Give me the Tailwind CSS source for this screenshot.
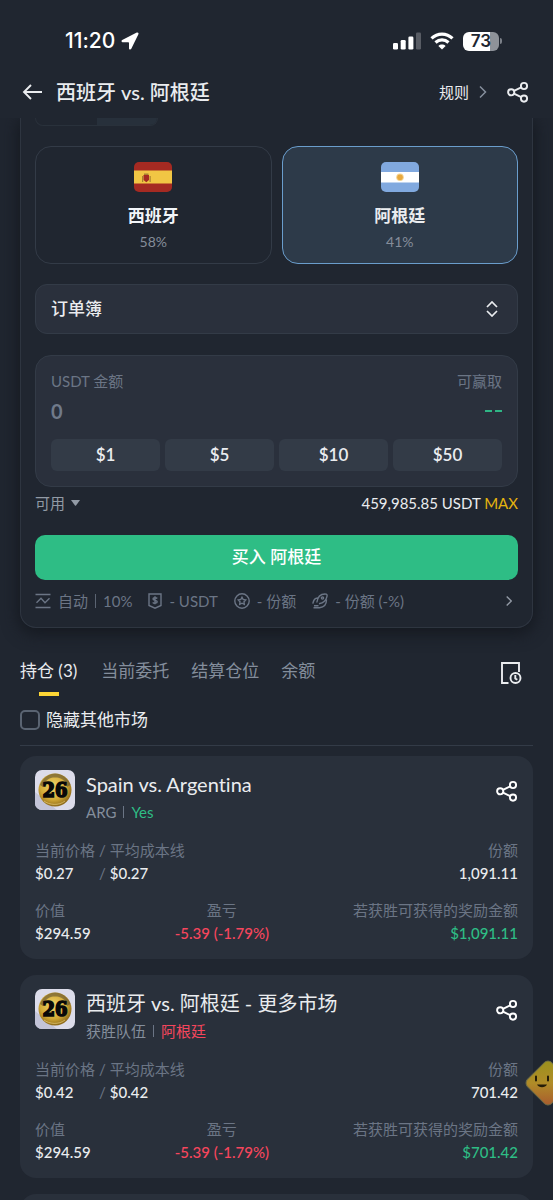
<!DOCTYPE html>
<html lang="zh-CN">
<head>
<meta charset="utf-8">
<meta name="viewport" content="width=device-width, initial-scale=1">
<title>西班牙 vs. 阿根廷</title>
<script src="https://cdn.jsdelivr.net/npm/@tailwindcss/browser@4"></script>
</head>
<body class="relative flex h-dvh flex-col overflow-hidden bg-[#202630] font-[Lato,'Noto_Sans_CJK_SC',sans-serif] text-[15px] leading-5 text-[#eaecef] [font-variant-ligatures:none]">

<svg class="absolute size-0" aria-hidden="true">
  <symbol id="share" viewBox="0 0 22 22">
    <g fill="none" stroke="currentColor" stroke-width="1.9">
      <circle cx="4.2" cy="11.300" r="3.1"/><circle cx="17" cy="5" r="3.1"/><circle cx="17" cy="17.600" r="3.1"/>
      <path d="M7 9.900l7.200-3.500M7 12.700l7.200 3.500"/>
    </g>
  </symbol>
  <symbol id="ball" viewBox="0 0 40 40">
    <rect width="40" height="40" rx="7" fill="#dcdcea"/>
    <path d="M0 22L22 40H7a7 7 0 0 1-7-7z" fill="#c3c4d8"/>
    <circle cx="20" cy="20" r="16.5" fill="url(#gold)"/>
    <path d="M5 15C8 7 15 3.600 20 3.500S33 7 35.500 15L32 17C31 10 26 7.500 20 7.500S10 10 8 17z" fill="#5f5233" opacity=".6"/>
    <path d="M9 31c5 4 15 5 21 0" fill="none" stroke="#f0d888" stroke-width="1" opacity=".6"/>
  </symbol>
  <defs>
    <radialGradient id="gold" cx=".45" cy=".4" r=".65"><stop offset="0" stop-color="#f0d46c"/><stop offset=".6" stop-color="#d3aa36"/><stop offset="1" stop-color="#7d5b14"/></radialGradient>
    <linearGradient id="mascot" gradientUnits="userSpaceOnUse" x1="6" y1="7" x2="40" y2="41"><stop offset="0" stop-color="#9a921c"/><stop offset=".5" stop-color="#b08c28"/><stop offset="1" stop-color="#a8582f"/></linearGradient>
  </defs>
</svg>

<header class="shrink-0">
  <div class="flex h-[66px] items-end justify-between pr-[51px] pb-3 pl-[65px] text-white">
    <div class="flex items-center gap-1.5">
      <span class="font-[Inter,sans-serif] text-[21px] leading-[26px] font-medium">11:20</span>
      <svg class="size-[18px]" viewBox="0 0 18 18" fill="currentColor"><path d="M15.800.6L1.200 8c-1.100.6-.8 2.200.4 2.200h5.700c.5 0 .7.2.7.700v5.500c0 1.300 1.700 1.600 2.300.4L17.400 2.200C17.900 1 17 .1 15.800.6z"/></svg>
    </div>
    <div class="flex h-[26px] items-center gap-[9px]">
      <svg class="h-[18px] w-7" viewBox="0 0 28 18" fill="currentColor"><rect y="11" width="5" height="6.500" rx="1.300"/><rect x="7.700" y="8" width="5" height="9.500" rx="1.300"/><rect x="15.400" y="4.500" width="5" height="13" rx="1.300"/><rect x="23" y=".5" width="5" height="17" rx="1.300" opacity=".25"/></svg>
      <svg class="h-[18px] w-6" viewBox="0 0 24 18" fill="none" stroke="currentColor" stroke-width="3.200"><path d="M1.500 6.300c6-5.700 15-5.700 21 0M5.500 10.500c3.800-3.500 9.200-3.500 13 0"/><path d="M12 17.500l-3.600-3.600c2-1.900 5.200-1.900 7.200 0z" fill="currentColor" stroke="none"/></svg>
      <div class="flex items-center gap-px">
        <span class="flex h-[19px] w-9 items-center justify-center rounded-md bg-linear-to-r from-white from-74% to-[#8e9299] to-74% font-[Inter,sans-serif] text-[17px] leading-none font-semibold text-[#202630]">73</span>
        <span class="h-1.5 w-0.5 rounded-r-sm bg-[#7b8088]"></span>
      </div>
    </div>
  </div>
  <div class="flex h-[52px] items-center pr-6 pl-[22px]">
    <button type="button" aria-label="返回" class="mr-3"><svg class="h-[18px] w-[22px]" viewBox="0 0 22 18" fill="none" stroke="currentColor" stroke-width="1.900"><path d="M20 9H2M9 2L2 9l7 7"/></svg></button>
    <h1 class="flex-1 text-xl leading-7 font-medium">西班牙 vs. 阿根廷</h1>
    <button type="button" class="mr-5 flex items-center gap-2.5">规则<svg class="h-3 w-2" viewBox="0 0 8 12" fill="none" stroke="#848e9c" stroke-width="1.500"><path d="M1 .5L6.500 6 1 11.500"/></svg></button>
    <button type="button" aria-label="分享"><svg class="size-[22px]"><use href="#share"/></svg></button>
  </div>
</header>

<main class="min-h-0 flex-1 overflow-x-hidden overflow-y-auto px-5 [scrollbar-width:none]">
  <section class="rounded-b-2xl border border-t-0 border-[#2e3540] px-3.5 pb-4 shadow-[0_4px_16px_2px_#151920]">
    <div class="flex h-2 w-[123px] overflow-hidden rounded-b-lg border border-t-0 border-[#29313b]"><div class="flex-1"></div><div class="flex-1 bg-[#27303b]"></div></div>

    <div class="mt-5 grid grid-cols-2 gap-2.5">
      <button type="button" class="flex h-[118px] flex-col items-center rounded-2xl border border-[#333b47] pt-[15px]">
        <svg class="h-[30px] w-[38px]" viewBox="0 0 38 30"><defs><clipPath id="fr"><rect width="38" height="30" rx="5"/></clipPath></defs><g clip-path="url(#fr)"><path fill="#a52a22" d="M0 0h38v30H0z"/><path fill="#f1c644" d="M0 8.500h38v13H0z"/><path fill="#a52a22" d="M9.500 13h5.500v5l-2.700 2.300L9.500 18z"/><path fill="#a78030" d="M8 14h1.200v6H8zM15.500 14h1.200v6h-1.200zM10 11.500h4.500V13H10z"/></g></svg>
        <span class="mt-3 text-[17px] leading-6 font-bold text-[#f2f5f9]">西班牙</span>
        <span class="mt-1 text-sm leading-5 text-[#858d9a]">58%</span>
      </button>
      <button type="button" aria-pressed="true" class="flex h-[118px] flex-col items-center rounded-2xl border border-[#6a9dcc] bg-[#2d3a49] pt-[15px]">
        <svg class="h-[30px] w-[38px]" viewBox="0 0 38 30"><g clip-path="url(#fr)"><path fill="#81a9df" d="M0 0h38v30H0z"/><path fill="#fff" d="M0 10h38v10.500H0z"/><circle cx="19" cy="15.200" r="3.800" fill="#f5d391"/><circle cx="19" cy="15.200" r="2.800" fill="#e8a93e"/></g></svg>
        <span class="mt-3 text-[17px] leading-6 font-bold">阿根廷</span>
        <span class="mt-1 text-sm leading-5 text-[#858d9a]">41%</span>
      </button>
    </div>

    <div class="relative mt-5">
      <select aria-label="订单簿" class="h-[50px] w-full appearance-none rounded-xl border border-[#333b47] bg-[#2a303c] px-[15px] text-[17px] font-medium text-[#eaecef]"><option>订单簿</option></select>
      <svg class="pointer-events-none absolute top-[17px] right-5 h-4 w-3" viewBox="0 0 12 16" fill="none" stroke="currentColor" stroke-width="1.700"><path d="M1 6l5-5 5 5M1 10l5 5 5-5"/></svg>
    </div>

    <div class="mt-[21px] rounded-2xl border border-[#333b47] bg-[#2a303c] p-[15px]">
      <div class="flex justify-between text-[#6b7585]"><label for="amount">USDT 金额</label><span>可赢取</span></div>
      <div class="mt-1.5 flex items-center justify-between">
        <input id="amount" inputmode="decimal" placeholder="0" class="h-7 min-w-0 flex-1 bg-transparent text-[20px] font-bold outline-none placeholder:text-[#707a8a]">
        <span class="flex gap-[3px]"><i class="h-0.5 w-[7px] bg-[#2fb585]"></i><i class="h-0.5 w-[7px] bg-[#2fb585]"></i></span>
      </div>
      <div class="mt-3.5 grid grid-cols-4 gap-[5px] text-[17px] font-semibold">
        <button type="button" class="h-8 rounded-md bg-[#333b47]">$1</button>
        <button type="button" class="h-8 rounded-md bg-[#333b47]">$5</button>
        <button type="button" class="h-8 rounded-md bg-[#333b47]">$10</button>
        <button type="button" class="h-8 rounded-md bg-[#333b47]">$50</button>
      </div>
    </div>

    <div class="mt-1.5 flex items-center justify-between">
      <button type="button" class="flex items-center gap-1.5 text-[#929aa5]">可用<svg class="h-1.5 w-[9px]" viewBox="0 0 9 6" fill="currentColor"><path d="M.5 0h8q.5 0 .2.600L5 5.500q-.5.500-1 0L.3.600Q0 0 .5 0z"/></svg></button>
      <p>459,985.85 USDT <button type="button" class="text-[#e5b30e]">MAX</button></p>
    </div>

    <button type="button" class="mt-[22px] h-[45px] w-full rounded-[10px] bg-[#2ebd85] pb-0.5 text-[17px] font-medium text-white">买入 阿根廷</button>

    <div class="mt-[11px] flex items-center text-[#6b7585]">
      <svg class="mr-[7px] size-4 shrink-0" viewBox="0 0 16 16" fill="none" stroke="currentColor" stroke-width="1.400"><path d="M.5 1.500h15M.5 14.500h15M1.500 9.700L6 5.200l4 4.500 4.500-4.500"/></svg>
      <span>自动</span><i class="mx-[7px] h-3.5 w-px bg-[#5b6472]"></i><span>10%</span>
      <svg class="mr-[7px] ml-4 h-4 w-3.5 shrink-0" viewBox="0 0 14 16" fill="none" stroke="currentColor" stroke-width="1.400"><path d="M1 1h12v11.500l-6 2.700-6-2.700z"/><path d="M9.200 5.500C8.500 4.400 5 4.300 5 6s4.200 1.100 4.200 2.800S5.500 10.600 4.800 9.300M7 3.300v8"/></svg>
      <span>- USDT</span>
      <svg class="mr-[7px] ml-4 size-4 shrink-0" viewBox="0 0 16 16" fill="none" stroke="currentColor" stroke-width="1.400"><circle cx="8" cy="8" r="7.200"/><path d="M8 4.300l1.200 2.200 2.500.5-1.700 1.800.3 2.500L8 10.200l-2.300 1.100.3-2.500L4.300 7l2.500-.5z"/></svg>
      <span>- 份额</span>
      <svg class="mr-[7px] ml-4 size-4 shrink-0" viewBox="0 0 16 16" fill="none" stroke="currentColor" stroke-width="1.400"><path d="M.8 10.700C1.500 7 3 4.700 6 5M4.800 9.500C5.500 4 8.500.8 13.500 1c1.300 0 1.800.9 1.500 2.300-.8 4-3.200 6.400-8 7.500M14.500 6.500c0 4-2 7.800-7 8.200H1.500M2 12.700h4.500"/><circle cx="10.500" cy="5" r="1.100"/></svg>
      <span>- 份额 (-%)</span>
      <svg class="mr-1.5 ml-auto h-2.5 w-1.5" viewBox="0 0 6 10" fill="none" stroke="#929aa5" stroke-width="1.400"><path d="M.7.500L5.300 5 .7 9.500"/></svg>
    </div>
  </section>

  <nav class="mt-[31px] flex text-[17px] leading-6 text-[#848e9c]">
    <a href="#" class="relative mr-6 h-[37px] text-[#eaecef]">持仓 (3)<i class="absolute bottom-0 left-1/2 h-1 w-5 -translate-x-1/2 bg-[#fcd535]"></i></a>
    <a href="#" class="mr-[22px]">当前委托</a>
    <a href="#" class="mr-[22px]">结算仓位</a>
    <a href="#">余额</a>
    <button type="button" aria-label="历史记录" class="mt-[3px] mr-[11px] ml-auto size-[22px] text-[#eaecef]"><svg class="size-[22px]" viewBox="0 0 22 22" fill="none" stroke="currentColor" stroke-width="1.900"><path d="M8.500 21H2V1h17v9"/><circle cx="15.500" cy="16" r="5"/><path d="M15.300 13v3.500l2 1.300"/></svg></button>
  </nav>

  <div class="mt-3 flex items-center gap-1.5 border-b border-[#333b47] pb-[13px]">
    <input id="hide" type="checkbox" class="size-5 appearance-none rounded-[5px] border-2 border-[#5a6472]">
    <label for="hide" class="text-[17px] leading-6">隐藏其他市场</label>
  </div>

  <div class="mt-2.5 flex flex-col gap-4">
    <article class="rounded-2xl bg-[#29303b] px-[15px] py-3.5">
      <div class="flex h-[52px] items-start">
        <svg class="mr-[11px] size-10 shrink-0 font-['DejaVu_Serif_Condensed','DejaVu_Serif',serif] text-[20px] font-bold" viewBox="0 0 40 40"><use href="#ball"/><text x="20" y="27" text-anchor="middle" fill="#090909" stroke="#090909" stroke-width="1.500">26</text></svg>
        <div class="min-w-0 flex-1"><h2 class="text-xl leading-7">Spain vs. Argentina</h2><p class="mt-1 flex items-center text-[#848e9c]">ARG<i class="mx-[7px] h-3 w-px bg-[#6b7585]"></i><span class="text-[#2ebd85]">Yes</span></p></div>
        <button type="button" aria-label="分享" class="mt-2.5 text-white"><svg class="size-[22px]"><use href="#share"/></svg></button>
      </div>
      <div class="mt-[17px] flex justify-between leading-[23px]">
        <dl class="grid grid-cols-[auto_auto_auto] gap-x-1 text-[#6b7585]"><dt>当前价格</dt><dt>/</dt><dt>平均成本线</dt><dd class="font-medium text-[#eaecef]">$0.27</dd><dd>/</dd><dd class="font-medium text-[#eaecef]">$0.27</dd></dl>
        <dl class="text-right"><dt class="text-[#6b7585]">份额</dt><dd class="font-medium">1,091.11</dd></dl>
      </div>
      <div class="mt-3.5 flex justify-between leading-[23px]">
        <dl><dt class="text-[#6b7585]">价值</dt><dd class="font-medium">$294.59</dd></dl>
        <dl class="text-center"><dt class="text-[#6b7585]">盈亏</dt><dd class="font-medium text-[#f6465d]">-5.39 (-1.79%)</dd></dl>
        <dl class="text-right"><dt class="text-[#6b7585]">若获胜可获得的奖励金额</dt><dd class="font-medium text-[#2ebd85]">$1,091.11</dd></dl>
      </div>
    </article>

    <article class="rounded-2xl bg-[#29303b] px-[15px] py-3.5">
      <div class="flex h-[52px] items-start">
        <svg class="mr-[11px] size-10 shrink-0 font-['DejaVu_Serif_Condensed','DejaVu_Serif',serif] text-[20px] font-bold" viewBox="0 0 40 40"><use href="#ball"/><text x="20" y="27" text-anchor="middle" fill="#090909" stroke="#090909" stroke-width="1.500">26</text></svg>
        <div class="min-w-0 flex-1"><h2 class="text-xl leading-7">西班牙 vs. 阿根廷 - 更多市场</h2><p class="mt-1 flex items-center text-[#848e9c]">获胜队伍<i class="mx-[7px] h-3 w-px bg-[#6b7585]"></i><span class="text-[#f6465d]">阿根廷</span></p></div>
        <button type="button" aria-label="分享" class="mt-2.5 text-white"><svg class="size-[22px]"><use href="#share"/></svg></button>
      </div>
      <div class="mt-[17px] flex justify-between leading-[23px]">
        <dl class="grid grid-cols-[auto_auto_auto] gap-x-1 text-[#6b7585]"><dt>当前价格</dt><dt>/</dt><dt>平均成本线</dt><dd class="font-medium text-[#eaecef]">$0.42</dd><dd>/</dd><dd class="font-medium text-[#eaecef]">$0.42</dd></dl>
        <dl class="text-right"><dt class="text-[#6b7585]">份额</dt><dd class="font-medium">701.42</dd></dl>
      </div>
      <div class="mt-3.5 flex justify-between leading-[23px]">
        <dl><dt class="text-[#6b7585]">价值</dt><dd class="font-medium">$294.59</dd></dl>
        <dl class="text-center"><dt class="text-[#6b7585]">盈亏</dt><dd class="font-medium text-[#f6465d]">-5.39 (-1.79%)</dd></dl>
        <dl class="text-right"><dt class="text-[#6b7585]">若获胜可获得的奖励金额</dt><dd class="font-medium text-[#2ebd85]">$701.42</dd></dl>
      </div>
    </article>

    <article class="h-[203px] rounded-2xl bg-[#29303b]"></article>
  </div>
</main>

<button type="button" aria-label="助手" class="absolute right-0 bottom-[93px] h-12 w-7 overflow-hidden">
  <svg class="h-12 w-7" viewBox="0 0 28 48"><rect x="6" y="7" width="34" height="34" rx="5" transform="rotate(45 23 24)" fill="url(#mascot)" stroke="#6f6c45"/><path d="M11 17.500v4M23 17.500v4" stroke="#241c08" stroke-width="2" stroke-linecap="round"/><path d="M12 25.500h10q-1.500 2.800-5 2.800t-5-2.800z" fill="#241c08"/></svg>
</button>
</body>
</html>
